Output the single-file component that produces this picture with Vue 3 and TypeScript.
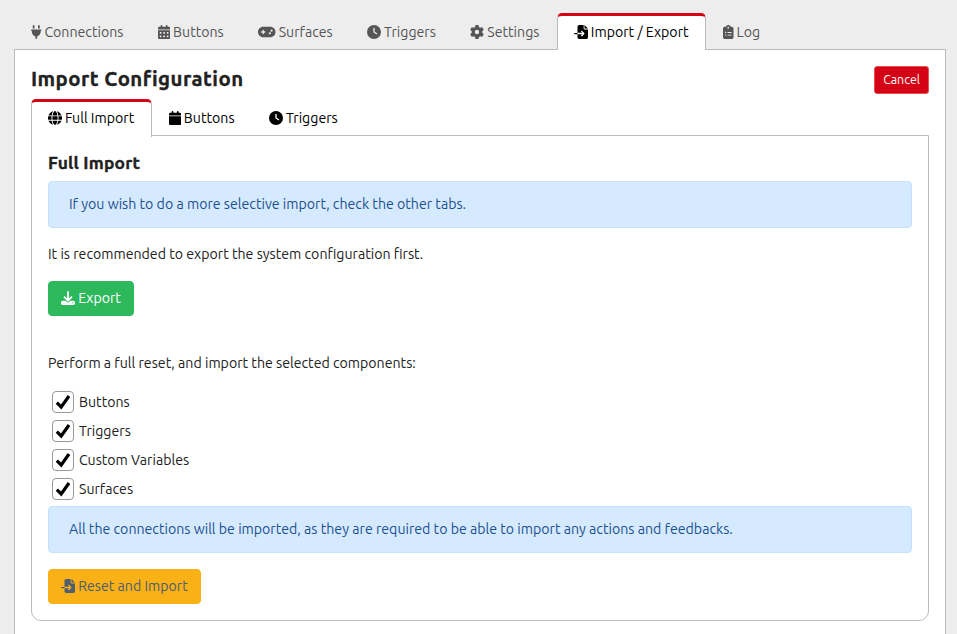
<script setup lang="ts">
import { ref } from 'vue'

interface Icon {
  w: number
  d: string
}

const icons: Record<string, Icon> = {
  plug: {
    w: 384,
    d: 'M96 0C78.3 0 64 14.3 64 32v96h64V32c0-17.7-14.3-32-32-32zM288 0c-17.7 0-32 14.3-32 32v96h64V32c0-17.7-14.3-32-32-32zM32 160c-17.7 0-32 14.3-32 32s14.3 32 32 32v32c0 77.4 55 142 128 156.8V480c0 17.7 14.3 32 32 32s32-14.3 32-32V412.8C297 398 352 333.4 352 256V224c17.7 0 32-14.3 32-32s-14.3-32-32-32H32z',
  },
  calendarDays: {
    w: 448,
    d: 'M128 0c17.7 0 32 14.3 32 32V64H288V32c0-17.7 14.3-32 32-32s32 14.3 32 32V64h48c26.5 0 48 21.5 48 48v48H0V112C0 85.5 21.5 64 48 64H96V32c0-17.7 14.3-32 32-32zM0 192H448V464c0 26.5-21.5 48-48 48H48c-26.5 0-48-21.5-48-48V192zm64 80v32c0 8.8 7.2 16 16 16h32c8.8 0 16-7.2 16-16V272c0-8.8-7.2-16-16-16H80c-8.8 0-16 7.2-16 16zm128 0v32c0 8.8 7.2 16 16 16h32c8.8 0 16-7.2 16-16V272c0-8.8-7.2-16-16-16H208c-8.8 0-16 7.2-16 16zm144-16c-8.8 0-16 7.2-16 16v32c0 8.8 7.2 16 16 16h32c8.8 0 16-7.2 16-16V272c0-8.8-7.2-16-16-16H336zM64 400v32c0 8.8 7.2 16 16 16h32c8.8 0 16-7.2 16-16V400c0-8.8-7.2-16-16-16H80c-8.8 0-16 7.2-16 16zm144-16c-8.8 0-16 7.2-16 16v32c0 8.8 7.2 16 16 16h32c8.8 0 16-7.2 16-16V400c0-8.8-7.2-16-16-16H208zm112 16v32c0 8.8 7.2 16 16 16h32c8.8 0 16-7.2 16-16V400c0-8.8-7.2-16-16-16H336c-8.8 0-16 7.2-16 16z',
  },
  calendar: {
    w: 448,
    d: 'M96 32V64H48C21.5 64 0 85.5 0 112v48H448V112c0-26.5-21.5-48-48-48H352V32c0-17.7-14.3-32-32-32s-32 14.3-32 32V64H160V32c0-17.7-14.3-32-32-32S96 14.3 96 32zM448 192H0V464c0 26.5 21.5 48 48 48H400c26.5 0 48-21.5 48-48V192z',
  },
  gamepad: {
    w: 640,
    d: 'M192 64C86 64 0 150 0 256S86 448 192 448H448c106 0 192-86 192-192s-86-192-192-192H192zM496 168a40 40 0 1 1 0 80 40 40 0 1 1 0-80zM392 304a40 40 0 1 1 80 0 40 40 0 1 1 -80 0zM168 200c0-13.3 10.7-24 24-24s24 10.7 24 24v32h32c13.3 0 24 10.7 24 24s-10.7 24-24 24H216v32c0 13.3-10.7 24-24 24s-24-10.7-24-24V280H136c-13.3 0-24-10.7-24-24s10.7-24 24-24h32V200z',
  },
  clock: {
    w: 512,
    d: 'M256 0a256 256 0 1 1 0 512A256 256 0 1 1 256 0zM232 120V256c0 8 4 15.5 10.7 20l96 64c11 7.4 25.9 4.4 33.3-6.7s4.4-25.9-6.7-33.3L280 243.2V120c0-13.3-10.7-24-24-24s-24 10.7-24 24z',
  },
  gear: {
    w: 512,
    d: 'M495.9 166.6c3.2 8.7 .5 18.4-6.4 24.6l-43.3 39.4c1.1 8.3 1.7 16.8 1.7 25.4s-.6 17.1-1.7 25.4l43.3 39.4c6.9 6.2 9.6 15.9 6.4 24.6c-4.4 11.9-9.7 23.3-15.8 34.3l-4.7 8.1c-6.6 11-14 21.4-22.1 31.2c-5.9 7.2-15.7 9.6-24.5 6.8l-55.7-17.7c-13.4 10.3-28.2 18.9-44 25.4l-12.5 57.1c-2 9.1-9 16.3-18.2 17.8c-13.8 2.3-28 3.5-42.5 3.5s-28.7-1.2-42.5-3.5c-9.2-1.5-16.2-8.7-18.2-17.8l-12.5-57.1c-15.8-6.5-30.6-15.1-44-25.4L83.1 425.9c-8.8 2.8-18.6 .3-24.5-6.8c-8.1-9.8-15.5-20.2-22.1-31.2l-4.7-8.1c-6.1-11-11.4-22.4-15.8-34.3c-3.2-8.7-.5-18.4 6.4-24.6l43.3-39.4C64.6 273.1 64 264.6 64 256s.6-17.1 1.7-25.4L22.4 191.2c-6.9-6.2-9.6-15.9-6.4-24.6c4.4-11.9 9.7-23.3 15.8-34.3l4.7-8.1c6.6-11 14-21.4 22.1-31.2c5.9-7.2 15.7-9.6 24.5-6.8l55.7 17.7c13.4-10.3 28.2-18.9 44-25.4l12.5-57.1c2-9.1 9-16.3 18.2-17.8C227.3 1.2 241.5 0 256 0s28.7 1.2 42.5 3.5c9.2 1.5 16.2 8.7 18.2 17.8l12.5 57.1c15.8 6.5 30.6 15.1 44 25.4l55.7-17.7c8.8-2.8 18.6-.3 24.5 6.8c8.1 9.8 15.5 20.2 22.1 31.2l4.7 8.1c6.1 11 11.4 22.4 15.8 34.3zM256 336a80 80 0 1 0 0-160 80 80 0 1 0 0 160z',
  },
  fileImport: {
    w: 512,
    d: 'M128 64c0-35.3 28.7-64 64-64H352V128c0 17.7 14.3 32 32 32H512V448c0 35.3-28.7 64-64 64H192c-35.3 0-64-28.7-64-64V336H302.1l-39 39c-9.4 9.4-9.4 24.6 0 33.9s24.6 9.4 33.9 0l80-80c9.4-9.4 9.4-24.6 0-33.9l-80-80c-9.4-9.4-24.6-9.4-33.9 0s-9.4 24.6 0 33.9l39 39H128V64zm0 224v48H24c-13.3 0-24-10.7-24-24s10.7-24 24-24H128zM512 128H384V0L512 128z',
  },
  clipboard: {
    w: 384,
    d: 'M192 0c-41.8 0-77.4 26.7-90.5 64H64C28.7 64 0 92.7 0 128V448c0 35.3 28.7 64 64 64H320c35.3 0 64-28.7 64-64V128c0-35.3-28.7-64-64-64H282.5C269.4 26.7 233.8 0 192 0zm0 64a32 32 0 1 1 0 64 32 32 0 1 1 0-64zM72 272a24 24 0 1 1 48 0 24 24 0 1 1 -48 0zm104-16H304c8.8 0 16 7.2 16 16s-7.2 16-16 16H176c-8.8 0-16-7.2-16-16s7.2-16 16-16zM72 368a24 24 0 1 1 48 0 24 24 0 1 1 -48 0zm88 0c0-8.8 7.2-16 16-16H304c8.8 0 16 7.2 16 16s-7.2 16-16 16H176c-8.8 0-16-7.2-16-16z',
  },
  globe: {
    w: 512,
    d: 'M352 256c0 22.2-1.2 43.6-3.3 64H163.3c-2.2-20.4-3.3-41.8-3.3-64s1.2-43.6 3.3-64H348.7c2.2 20.4 3.3 41.8 3.3 64zm28.8-64H503.9c5.3 20.5 8.1 41.9 8.1 64s-2.8 43.5-8.1 64H380.8c2.1-20.6 3.2-42 3.2-64s-1.1-43.4-3.2-64zm112.6-32H376.7c-10-63.9-29.8-117.4-55.3-151.6c78.3 20.7 142 77.5 171.9 151.6zm-149.1 0H167.7c6.1-36.4 15.5-68.6 27-94.7c10.5-23.6 22.2-40.7 33.5-51.5C239.4 3.2 248.7 0 256 0s16.6 3.2 27.8 13.8c11.3 10.8 23 27.9 33.5 51.5c11.6 26 20.9 58.2 27 94.7zm-209 0H18.6C48.6 85.9 112.2 29.1 190.6 8.4C165.1 42.6 145.3 96.1 135.3 160zM8.1 192H131.2c-2.1 20.6-3.2 42-3.2 64s1.1 43.4 3.2 64H8.1C2.8 299.5 0 278.1 0 256s2.8-43.5 8.1-64zM194.7 446.6c-11.6-26-20.9-58.2-27-94.6H344.3c-6.1 36.4-15.5 68.6-27 94.6c-10.5 23.6-22.2 40.7-33.5 51.5C272.6 508.8 263.3 512 256 512s-16.6-3.2-27.8-13.8c-11.3-10.8-23-27.9-33.5-51.5zM135.3 352c10 63.9 29.8 117.4 55.3 151.6C112.2 482.9 48.6 426.1 18.6 352H135.3zm358.1 0c-30 74.1-93.6 130.9-171.9 151.6c25.5-34.2 45.2-87.7 55.3-151.6H493.4z',
  },
  download: {
    w: 512,
    d: 'M288 32c0-17.7-14.3-32-32-32s-32 14.3-32 32V274.7l-73.4-73.4c-12.5-12.5-32.8-12.5-45.3 0s-12.5 32.8 0 45.3l128 128c12.5 12.5 32.8 12.5 45.3 0l128-128c12.5-12.5 12.5-32.8 0-45.3s-32.8-12.5-45.3 0L288 274.7V32zM64 352c-35.3 0-64 28.7-64 64v32c0 35.3 28.7 64 64 64H448c35.3 0 64-28.7 64-64V416c0-35.3-28.7-64-64-64H346.5l-45.3 45.3c-25 25-65.5 25-90.5 0L165.5 352H64zm368 56a24 24 0 1 1 0 48 24 24 0 1 1 0-48z',
  },
}

const mainTabs = [
  { label: 'Connections', icon: icons.plug },
  { label: 'Buttons', icon: icons.calendarDays },
  { label: 'Surfaces', icon: icons.gamepad },
  { label: 'Triggers', icon: icons.clock },
  { label: 'Settings', icon: icons.gear },
  { label: 'Import / Export', icon: icons.fileImport },
  { label: 'Log', icon: icons.clipboard },
]
const importTabs = [
  { label: 'Full Import', icon: icons.globe },
  { label: 'Buttons', icon: icons.calendar },
  { label: 'Triggers', icon: icons.clock },
]
const activeMain = ref('Import / Export')
const activeImport = ref('Full Import')

const components = ref([
  { label: 'Buttons', checked: true },
  { label: 'Triggers', checked: true },
  { label: 'Custom Variables', checked: true },
  { label: 'Surfaces', checked: true },
])
</script>

<template>
  <div class="page">
    <nav class="tabs main-tabs">
      <a
        v-for="t in mainTabs"
        :key="t.label"
        class="tab"
        :class="{ active: t.label === activeMain }"
        @click="activeMain = t.label"
      >
        <svg class="icon" :viewBox="`0 0 ${t.icon.w} 512`"><path :d="t.icon.d" /></svg>
        <span>{{ t.label }}</span>
      </a>
    </nav>
    <main class="panel">
      <header class="head">
        <h4>Import Configuration</h4>
        <button class="btn danger">Cancel</button>
      </header>
      <nav class="tabs sub-tabs">
        <a
          v-for="t in importTabs"
          :key="t.label"
          class="tab"
          :class="{ active: t.label === activeImport }"
          @click="activeImport = t.label"
        >
          <svg class="icon" :viewBox="`0 0 ${t.icon.w} 512`"><path :d="t.icon.d" /></svg>
          <span>{{ t.label }}</span>
        </a>
      </nav>
      <section class="content">
        <h5>Full Import</h5>
        <div class="alert">If you wish to do a more selective import, check the other tabs.</div>
        <p>It is recommended to export the system configuration first.</p>
        <button class="btn success">
          <svg class="icon" viewBox="0 0 512 512"><path :d="icons.download.d" /></svg>
          <span>Export</span>
        </button>
        <p class="reset-text">Perform a full reset, and import the selected components:</p>
        <div class="checks">
          <label v-for="c in components" :key="c.label" class="check">
            <input v-model="c.checked" type="checkbox" class="native" />
            <span class="box">
              <svg v-if="c.checked" class="mark" viewBox="0 0 20 20"><path d="M3.8 10.6 8.2 15 16 4" /></svg>
            </span>
            <span>{{ c.label }}</span>
          </label>
        </div>
        <div class="alert">
          All the connections will be imported, as they are required to be able to import any actions and feedbacks.
        </div>
        <button class="btn warning">
          <svg class="icon" viewBox="0 0 512 512"><path :d="icons.fileImport.d" /></svg>
          <span>Reset and Import</span>
        </button>
      </section>
    </main>
  </div>
</template>

<style>
body {
  background: #ededed;
}
</style>

<style scoped>
.page,
.page * {
  box-sizing: border-box;
}
.page {
  height: 634px;
  overflow: hidden;
  padding: 13px 11px 0 14px;
  display: flex;
  flex-direction: column;
  background: #ededed;
  color: #212121;
  font-family: Ubuntu, 'Noto Sans', 'Open Sans', sans-serif;
  font-size: 14.16px;
  line-height: 21px;
}
h4,
h5,
p {
  margin: 0;
}
.icon {
  height: 14px;
  width: auto;
  flex: none;
  fill: currentColor;
}
.tabs {
  display: flex;
}
.tab {
  display: flex;
  align-items: center;
  gap: 2.9px;
  height: 37px;
  padding: 0 16.5px 2px 16px;
  border: 1px solid transparent;
  border-top-width: 3px;
  border-bottom: 0;
  border-radius: 5px 5px 0 0;
  white-space: nowrap;
  cursor: pointer;
}
.tab.active {
  position: relative;
  z-index: 1;
  background: #fff;
  border-color: #bbb;
  border-top-color: #d50215;
  color: #000;
}
.main-tabs {
  color: #555;
  margin-bottom: -1px;
}
.panel {
  flex: none;
  height: 640px;
  background: #fff;
  border: 1px solid #bbb;
  padding: 16px;
}
.head {
  display: flex;
  justify-content: space-between;
  align-items: flex-start;
  height: 33px;
}
h4,
h5 {
  font-weight: 700;
  -webkit-text-stroke: 0.35px currentColor;
}
h4 {
  font-size: 20.4px;
  letter-spacing: 0.45px;
  line-height: 25px;
}
.sub-tabs {
  height: 36px;
  color: #000;
}
.sub-tabs .tab.active {
  height: 38px;
  padding-bottom: 3px;
}
.content {
  border: 1px solid #bbb;
  border-radius: 0 0 10px 10px;
  padding: 16px;
  height: 486px;
}
h5 {
  font-size: 17.4px;
  letter-spacing: 0.2px;
  line-height: 21px;
  margin-bottom: 8px;
}
.alert {
  height: 47px;
  padding: 12px 20px;
  border: 1px solid #c6e2ff;
  border-radius: 4px;
  background: #d6eaff;
  color: #1b508f;
  margin-bottom: 16px;
}
p {
  margin-bottom: 16px;
}
.btn {
  display: flex;
  align-items: center;
  gap: 3.2px;
  height: 35px;
  padding: 0 12px;
  border: 1px solid transparent;
  border-radius: 4px;
  font: inherit;
  color: #fff;
  white-space: nowrap;
}
.btn .icon {
  margin-bottom: 1px;
}
.success {
  background: #2eb85c;
  border-color: #2eb85c;
}
.warning {
  background: #f9b115;
  border-color: #f9b115;
  color: #4f5d73;
}
.danger {
  height: 28px;
  padding: 0 8px 2px;
  border-color: #e55353;
  border-radius: 3px;
  background: #d50215;
  font-size: 12.4px;
}
.reset-text {
  margin-top: 37px;
  margin-bottom: 14px;
}
.checks {
  padding-left: 4px;
  margin-bottom: 2px;
}
.check {
  display: flex;
  align-items: center;
  gap: 5px;
  height: 29px;
  position: relative;
}
.native {
  position: absolute;
  opacity: 0;
}
.box {
  width: 22px;
  height: 22px;
  margin-bottom: 1px;
  border: 1px solid #999;
  border-radius: 4px;
  background: #fff;
}
.mark {
  display: block;
  width: 20px;
  height: 20px;
  fill: none;
  stroke: #000;
  stroke-width: 3.2;
}
</style>
